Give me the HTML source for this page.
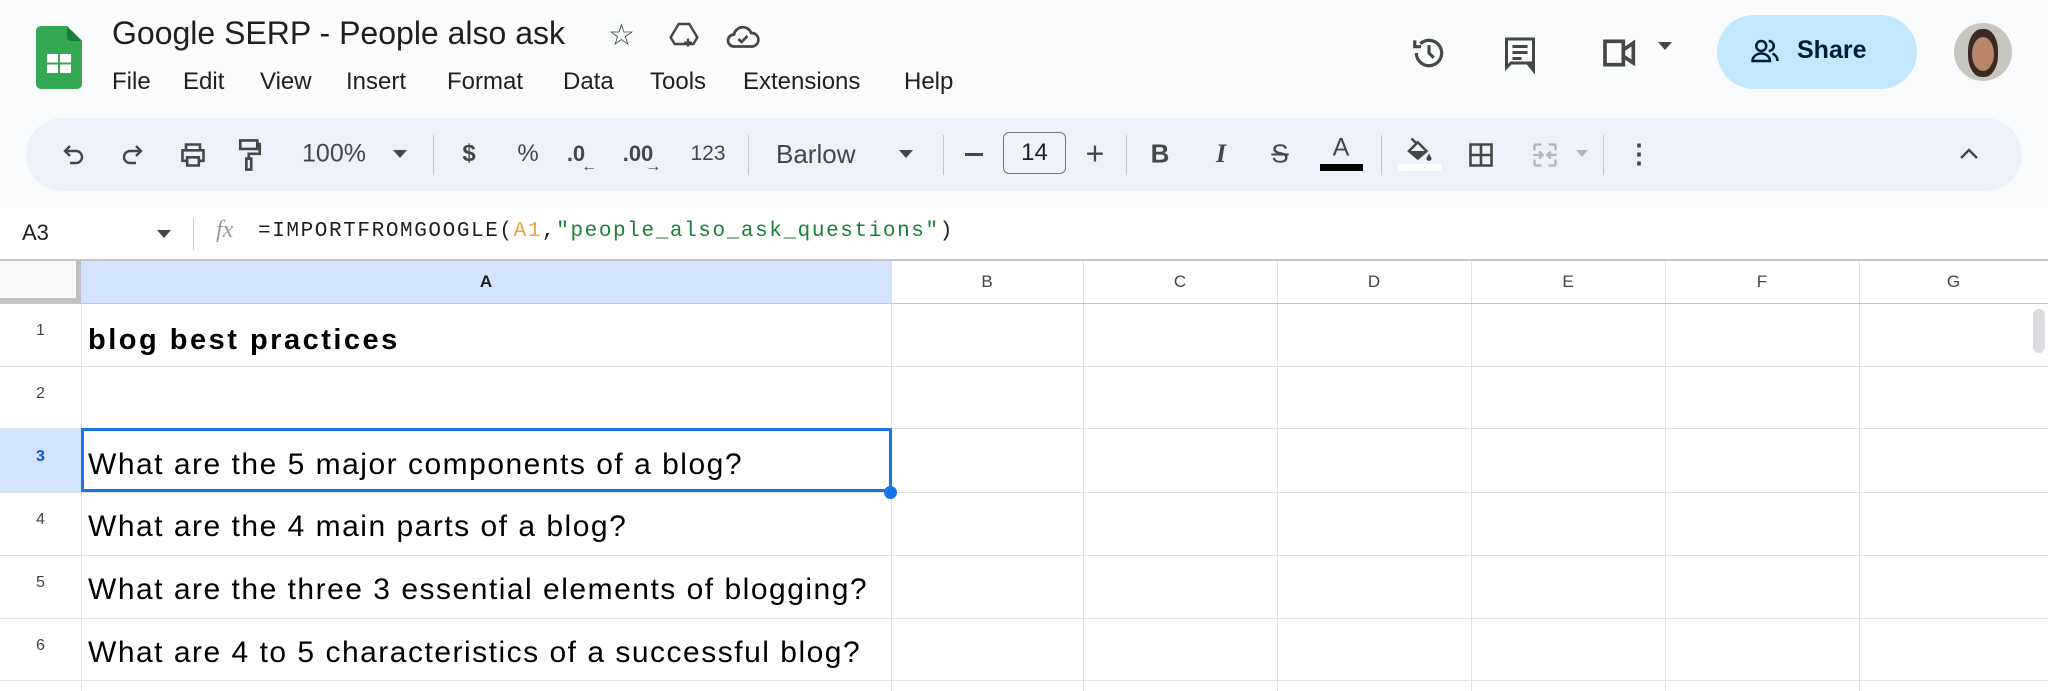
<!DOCTYPE html>
<html><head><meta charset="utf-8"><style>
*{margin:0;padding:0;box-sizing:border-box}
body{width:2048px;height:691px;overflow:hidden;background:#f9fbfd;font-family:"Liberation Sans",Arial,sans-serif;color:#1f1f1f;position:relative}
.a{position:absolute}
.menu span{position:absolute;top:68px;font-size:24px;color:#1f1f1f}
.tb{position:absolute;top:118px;left:26px;width:1996px;height:73px;background:#edf2fa;border-radius:37px}
.ic{position:absolute;top:154px;transform:translate(-50%,-50%);font-size:24px;color:#444746}
.sep{position:absolute;top:135px;width:1px;height:40px;background:#c7c7c7}
.grid{position:absolute;left:0;top:261px;width:2048px;height:430px;background:#fff}
.vl{position:absolute;top:261px;width:1px;height:430px;background:#e1e1e1}
.hl{position:absolute;left:0;width:2048px;height:1px;background:#e1e1e1}
.ch{position:absolute;top:261px;height:42px;line-height:42px;text-align:center;font-size:17px;color:#444}
.rn{position:absolute;left:0;width:81px;text-align:center;font-size:16px;color:#444}
.ct{position:absolute;left:88px;font-size:30px;color:#000;letter-spacing:1.5px;white-space:nowrap}
</style></head><body>
<svg class="a" style="left:36px;top:26px" width="46" height="63" viewBox="0 0 46 63"><path d="M5 0h26l15 15v43a5 5 0 0 1-5 5H5a5 5 0 0 1-5-5V5a5 5 0 0 1 5-5z" fill="#34a853"/><path d="M31 0v11a4 4 0 0 0 4 4h11z" fill="#188038"/><rect x="11" y="28" width="24" height="19" fill="#fff"/><rect x="22" y="28" width="2" height="19" fill="#34a853"/><rect x="11" y="36.5" width="24" height="2" fill="#34a853"/></svg>
<div class="a" style="left:112px;top:15px;font-size:32px;color:#1f1f1f;letter-spacing:0px">Google SERP - People also ask</div>
<div class="a" style="left:608px;top:18px;font-size:30px;color:#444746">☆</div>
<svg class="a" style="left:668px;top:20px" width="32" height="32" viewBox="0 0 24 24" fill="none" stroke="#444746" stroke-width="1.8"><path d="M8 3h8l6 10-3 5H5l-3-5z"/><path d="M15 14v6M12 17h6"/></svg>
<svg class="a" style="left:725px;top:20px" width="36" height="32" viewBox="0 0 24 20" fill="none" stroke="#444746" stroke-width="1.8"><path d="M6 17a4 4 0 0 1 0-8 6 6 0 0 1 11.5-1A4.5 4.5 0 0 1 18 17z"/><path d="M9 12l2 2 4-4"/></svg>
<div class="menu"><span style="left:112px">File</span><span style="left:183px">Edit</span><span style="left:260px">View</span><span style="left:346px">Insert</span><span style="left:447px">Format</span><span style="left:563px">Data</span><span style="left:650px">Tools</span><span style="left:743px">Extensions</span><span style="left:904px">Help</span></div>
<svg class="a" style="left:1410px;top:34px" width="38" height="38" viewBox="0 0 24 24" fill="none" stroke="#444746" stroke-width="2"><path d="M4 12a8 8 0 1 0 2.5-5.8"/><path d="M3 4v4h4"/><path d="M12 7v5l3 3"/></svg>
<svg class="a" style="left:1502px;top:34px" width="36" height="40" viewBox="0 0 24 26" fill="none" stroke="#444746" stroke-width="2"><path d="M3 3h18v16H6l-3 3z" /><path d="M7 8h10M7 12h10M7 16h6"/><path d="M21 19v5l-4-5" fill="#444746"/></svg>
<svg class="a" style="left:1600px;top:36px" width="40" height="34" viewBox="0 0 24 20" fill="none" stroke="#444746" stroke-width="2.2"><path d="M3 3h11v14H3z"/><path d="M14 8l6-4v12l-6-4"/></svg>
<div class="a" style="left:1658px;top:42px;width:0;height:0;border-left:7px solid transparent;border-right:7px solid transparent;border-top:8px solid #444746"></div>
<div class="a" style="left:1717px;top:15px;width:200px;height:74px;border-radius:37px;background:#c2e7ff"></div>
<svg class="a" style="left:1750px;top:38px" width="30" height="26" viewBox="0 0 24 20" fill="none" stroke="#001d35" stroke-width="2"><circle cx="9" cy="6" r="4"/><path d="M2 18c0-4 4-6 7-6s7 2 7 6z"/><path d="M15 2a4 4 0 0 1 0 8M18 12c2 1 4 3 4 6"/></svg>
<div class="a" style="left:1797px;top:36px;font-size:25px;font-weight:bold;color:#001d35">Share</div>
<div class="a" style="left:1954px;top:23px;width:58px;height:58px;border-radius:50%;background:#c8c6c0;overflow:hidden"><div class="a" style="left:14px;top:6px;width:30px;height:48px;border-radius:45%;background:#3a2a22"></div><div class="a" style="left:18px;top:14px;width:22px;height:34px;border-radius:50%;background:#b7876a"></div></div>
<div class="tb"></div>
<svg class="a" style="left:62px;top:142px" width="24" height="26" viewBox="0 0 24 24" fill="none" stroke="#444746" stroke-width="2.4"><path d="M4 8h10a6 6 0 0 1 0 12H8"/><path d="M8 3L3 8l5 5"/></svg>
<svg class="a" style="left:120px;top:142px" width="24" height="26" viewBox="0 0 24 24" fill="none" stroke="#444746" stroke-width="2.4"><path d="M20 8H10a6 6 0 0 0 0 12h6"/><path d="M16 3l5 5-5 5"/></svg>
<svg class="a" style="left:178px;top:141px" width="30" height="28" viewBox="0 0 24 24" fill="none" stroke="#444746" stroke-width="2.2"><path d="M6 8V3h12v5M6 17H3V8h18v9h-3M7 14h10v7H7z"/></svg>
<svg class="a" style="left:237px;top:138px" width="26" height="34" viewBox="0 0 20 28" fill="none" stroke="#444746" stroke-width="2.2"><path d="M2 2h14v7H2zM16 5h2v8H9v4M7 17h4v9H7z"/></svg>
<div class="ic" style="left:334px;font-size:25px">100%</div>
<div class="a" style="left:393px;top:150px;border-left:7px solid transparent;border-right:7px solid transparent;border-top:8px solid #444746"></div>
<div class="sep" style="left:433px"></div>
<div class="ic" style="left:469px;font-weight:bold">$</div>
<div class="ic" style="left:528px">%</div>
<div class="ic" style="left:584px;font-weight:bold;font-size:22px">.0<span style="font-size:16px;position:relative;top:10px;left:-4px">←</span></div>
<div class="ic" style="left:646px;font-weight:bold;font-size:22px">.00<span style="font-size:16px;position:relative;top:10px;left:-8px">→</span></div>
<div class="ic" style="left:708px;font-size:21px">123</div>
<div class="sep" style="left:748px"></div>
<div class="a" style="left:776px;top:139px;font-size:26px;color:#444746">Barlow</div>
<div class="a" style="left:899px;top:150px;border-left:7px solid transparent;border-right:7px solid transparent;border-top:8px solid #444746"></div>
<div class="sep" style="left:943px"></div>
<div class="a" style="left:965px;top:153px;width:18px;height:2.5px;background:#444746"></div>
<div class="a" style="left:1003px;top:132px;width:63px;height:42px;border:1.5px solid #747775;border-radius:6px;text-align:center;line-height:40px;font-size:24px;color:#1f1f1f">14</div>
<div class="ic" style="left:1095px;font-size:32px">+</div>
<div class="sep" style="left:1126px"></div>
<div class="ic" style="left:1160px;font-weight:bold;font-size:26px">B</div>
<div class="ic" style="left:1221px;font-style:italic;font-weight:bold;font-size:26px;font-family:'Liberation Serif',serif">I</div>
<div class="ic" style="left:1280px;font-size:26px;text-decoration:line-through">S</div>
<div class="ic" style="left:1341px;top:148px;font-size:25px">A</div>
<div class="a" style="left:1320px;top:164px;width:43px;height:7px;background:#000"></div>
<div class="sep" style="left:1381px"></div>
<svg class="a" style="left:1404px;top:136px" width="30" height="30" viewBox="0 0 24 24" fill="#444746"><path d="M4 12l7-7 7 7-7 6z" fill="none" stroke="#444746" stroke-width="2"/><path d="M5 12h12l-6 6z"/><path d="M20 14c1 2 2 3 2 4a2 2 0 0 1-4 0c0-1 1-2 2-4z"/><path d="M6 2l4 4" stroke="#444746" stroke-width="2"/></svg>
<div class="a" style="left:1398px;top:164px;width:43px;height:7px;background:#fff"></div>
<svg class="a" style="left:1467px;top:141px" width="28" height="28" viewBox="0 0 24 24" fill="none" stroke="#444746" stroke-width="2.2"><path d="M3 3h18v18H3zM12 3v18M3 12h18"/></svg>
<svg class="a" style="left:1530px;top:141px" width="30" height="28" viewBox="0 0 24 24" fill="none" stroke="#b4b4b4" stroke-width="2"><path d="M3 3h6M15 3h6M3 21h6M15 21h6M3 3v5M3 16v5M21 3v5M21 16v5M2 12h7M22 12h-7M7 9l3 3-3 3M17 9l-3 3 3 3"/></svg>
<div class="a" style="left:1576px;top:150px;border-left:6px solid transparent;border-right:6px solid transparent;border-top:7px solid #b4b4b4"></div>
<div class="sep" style="left:1603px"></div>
<div class="ic" style="left:1639px;font-weight:bold;font-size:26px">⋮</div>
<svg class="a" style="left:1958px;top:146px" width="22" height="14" viewBox="0 0 22 14" fill="none" stroke="#444746" stroke-width="2.4"><path d="M3 12l8-8 8 8"/></svg>
<div class="a" style="left:0;top:207px;width:2048px;height:53px;background:#fff"></div>
<div class="a" style="left:22px;top:220px;font-size:22px;color:#1f1f1f">A3</div>
<div class="a" style="left:157px;top:230px;border-left:7px solid transparent;border-right:7px solid transparent;border-top:8px solid #444746"></div>
<div class="a" style="left:193px;top:218px;width:1px;height:32px;background:#c7c7c7"></div>
<div class="a" style="left:216px;top:217px;font-size:24px;font-style:italic;font-family:'Liberation Serif',serif;color:#999">fx</div>
<div class="a" style="left:258px;top:220px;font-size:21px;font-family:'Liberation Mono',monospace;color:#1f1f1f;letter-spacing:1.6px">=IMPORTFROMGOOGLE(<span style="color:#e8a33c">A1</span>,<span style="color:#188038">"people_also_ask_questions"</span>)</div>
<div class="a" style="left:0;top:259px;width:2048px;height:2px;background:#c4c7c5"></div>
<div class="grid"></div>
<div class="a" style="left:0;top:261px;width:81px;height:42px;background:#f8f9fa;border-right:5px solid #c0c0c0;border-bottom:5px solid #c0c0c0"></div>
<div class="a" style="left:81px;top:261px;width:810px;height:42px;background:#d3e3fd"></div>
<div class="a" style="left:0;top:428px;width:81px;height:64px;background:#d3e3fd"></div>
<div class="vl" style="left:81px"></div><div class="vl" style="left:891px"></div><div class="vl" style="left:1083px"></div><div class="vl" style="left:1277px"></div><div class="vl" style="left:1471px"></div><div class="vl" style="left:1665px"></div><div class="vl" style="left:1859px"></div>
<div class="hl" style="top:303px;background:#c4c7c5"></div><div class="hl" style="top:366px"></div><div class="hl" style="top:428px"></div><div class="hl" style="top:492px"></div><div class="hl" style="top:555px"></div><div class="hl" style="top:618px"></div><div class="hl" style="top:680px"></div>
<div class="ch" style="left:81px;width:810px;font-weight:bold;color:#1f1f1f">A</div>
<div class="ch" style="left:891px;width:192px">B</div><div class="ch" style="left:1083px;width:194px">C</div><div class="ch" style="left:1277px;width:194px">D</div><div class="ch" style="left:1471px;width:194px">E</div><div class="ch" style="left:1665px;width:194px">F</div><div class="ch" style="left:1859px;width:189px">G</div>
<div class="rn" style="top:322px">1</div><div class="rn" style="top:385px">2</div><div class="rn" style="top:448px;font-weight:bold;color:#0b57d0">3</div><div class="rn" style="top:511px">4</div><div class="rn" style="top:574px">5</div><div class="rn" style="top:637px">6</div>
<div class="ct" style="top:324px;font-weight:bold;font-size:29px;letter-spacing:2.5px">blog best practices</div>
<div class="ct" style="top:448px">What are the 5 major components of a blog?</div>
<div class="ct" style="top:510px">What are the 4 main parts of a blog?</div>
<div class="ct" style="top:573px">What are the three 3 essential elements of blogging?</div>
<div class="ct" style="top:636px">What are 4 to 5 characteristics of a successful blog?</div>
<div class="a" style="left:81px;top:428px;width:811px;height:64px;border:3px solid #1a73e8"></div>
<div class="a" style="left:884px;top:486px;width:13px;height:13px;border-radius:50%;background:#1a73e8"></div>
<div class="a" style="left:2033px;top:309px;width:12px;height:44px;border-radius:6px;background:#dadce0"></div>
</body></html>
